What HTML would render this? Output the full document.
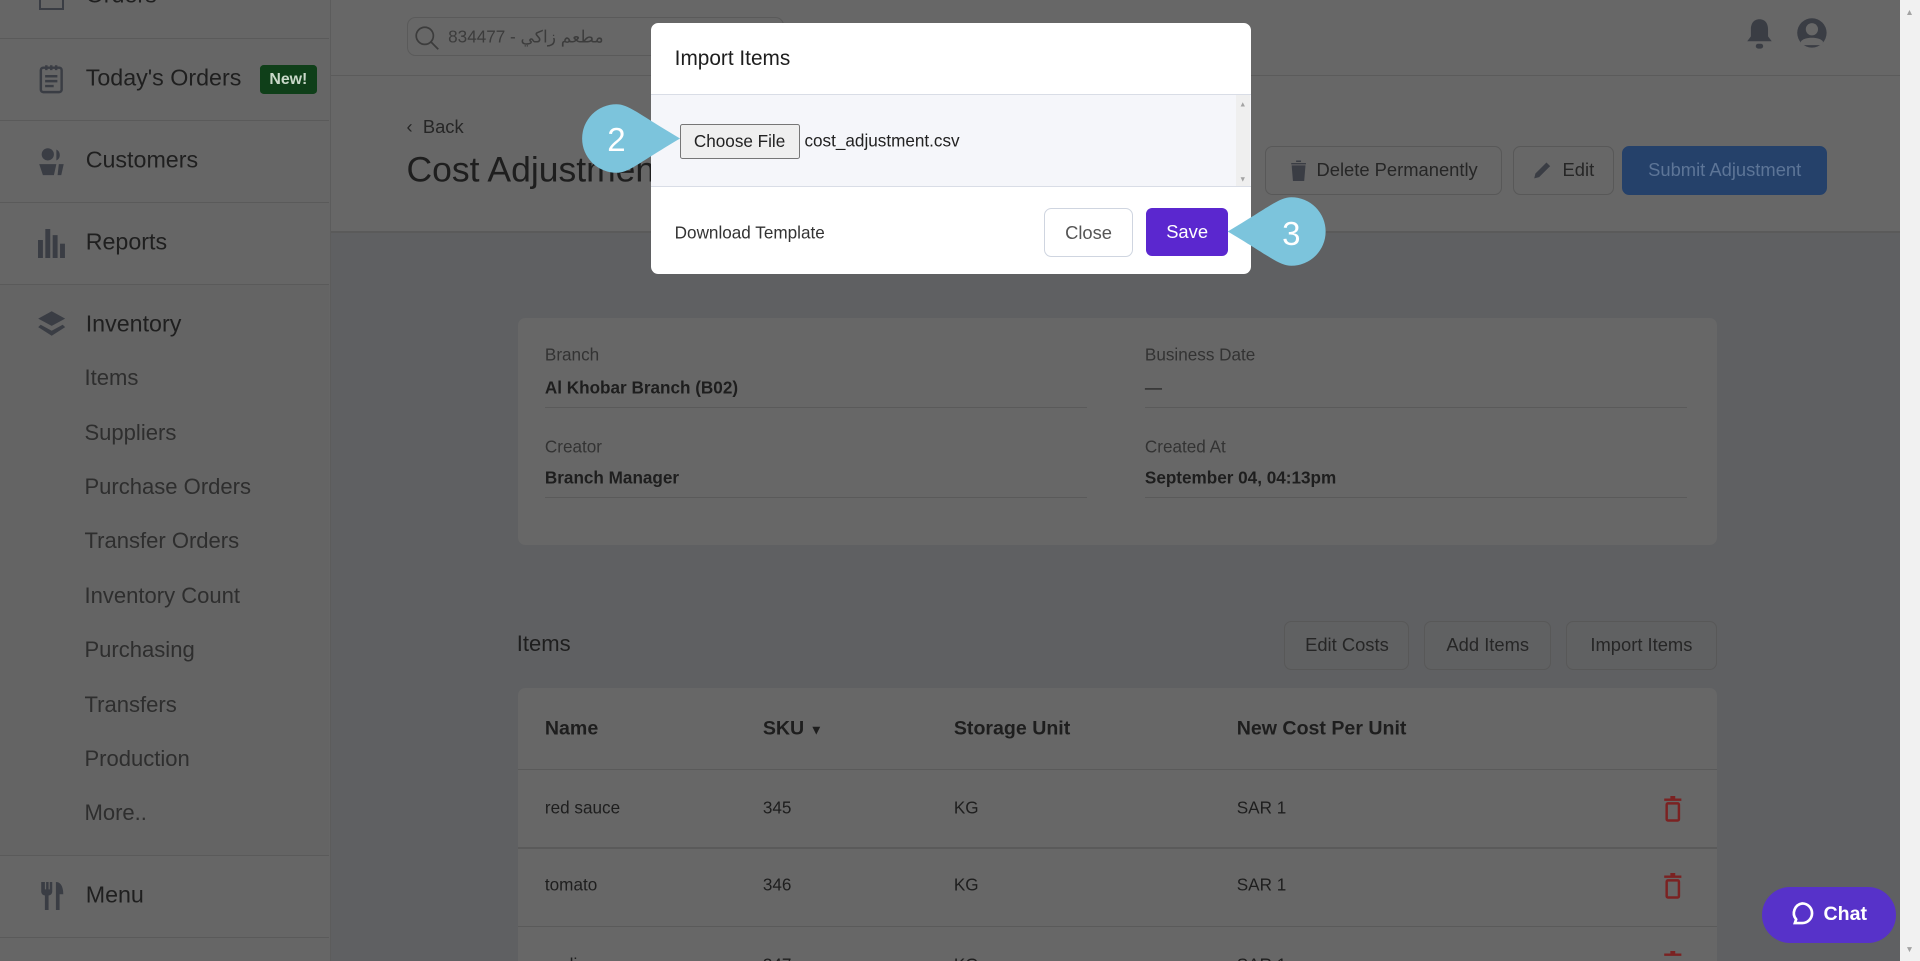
<!DOCTYPE html>
<html><head><meta charset="utf-8"><style>
*{box-sizing:border-box;margin:0;padding:0}
html,body{width:1920px;height:961px;overflow:hidden;background:#5f6062}
#w{zoom:1.22449;width:1568px;height:785px;position:relative;font-family:"Liberation Sans","Noto Sans CJK SC",sans-serif;color:#1e1e1e;overflow:hidden}
.a{position:absolute}
.sb{left:0;top:0;width:270px;height:785px;background:#666;border-right:1px solid #5c5c5c}
.sep{position:absolute;left:0;width:269px;height:1px;background:#5a5a5a}
.nav{position:absolute;left:70px;font-size:19px;color:#1f1f1f;transform:translateY(-50%)}
.sub{position:absolute;left:69px;font-size:18px;color:#2e2e2e;transform:translateY(-50%)}
.btn{position:absolute;border:1px solid #585858;border-radius:6px;font-size:15px;color:#262626;display:flex;align-items:center;justify-content:center;background:#676767}
.t{position:absolute;transform:translateY(-50%);white-space:nowrap}
</style></head><body><div id="w">
<!-- sidebar -->
<div class="a sb"></div>
<div class="a" style="left:0;top:232px;width:269px;height:466px;background:#646464"></div>
<div class="sep" style="top:31px"></div><div class="sep" style="top:98px"></div><div class="sep" style="top:165px"></div><div class="sep" style="top:232px"></div><div class="sep" style="top:698px"></div><div class="sep" style="top:765px"></div>
<div class="nav" style="top:-4px">Orders</div>
<div class="a" style="left:32px;top:0;width:20px;height:8px;border:2px solid #3a3d44;border-top:none"></div>
<svg class="a" style="left:32px;top:52px" width="20" height="25" viewBox="0 0 20 25"><rect x="1.5" y="3" width="17" height="20" rx="2" fill="none" stroke="#3a3d44" stroke-width="2"/><path d="M6 1v4M10 1v4M14 1v4M5 10h10M5 14h10M5 18h7" stroke="#3a3d44" stroke-width="2"/></svg>
<div class="nav" style="top:64px">Today's Orders</div>
<div class="a" style="left:212px;top:53px;width:47px;height:24px;background:#0f3f19;border-radius:3px;color:#c9d8c9;font-size:13px;font-weight:bold;display:flex;align-items:center;justify-content:center">New!</div>
<svg class="a" style="left:31px;top:120px" width="22" height="24" viewBox="0 0 22 24"><circle cx="8" cy="6" r="5" fill="#3a3d44"/><path d="M1 14h14l-2 9H4z" fill="#3a3d44"/><path d="M15 2a5 5 0 010 9M17 14h4l-2 9h-3z" fill="#3a3d44"/></svg>
<div class="nav" style="top:131px">Customers</div>
<svg class="a" style="left:31px;top:187px" width="22" height="24"><rect x="0" y="9" width="4" height="15" fill="#3a3d44"/><rect x="6" y="0" width="4" height="24" fill="#3a3d44"/><rect x="12" y="5" width="4" height="19" fill="#3a3d44"/><rect x="18" y="12" width="4" height="12" fill="#3a3d44"/></svg>
<div class="nav" style="top:198px">Reports</div>
<svg class="a" style="left:30px;top:253px" width="24" height="24" viewBox="0 0 24 24"><path d="M12 1l11 6-11 6L1 7z" fill="#3a3d44"/><path d="M3 12l9 5 9-5 2 2-11 7L1 14z" fill="#3a3d44"/></svg>
<div class="nav" style="top:265px">Inventory</div>
<div class="sub" style="top:309px">Items</div><div class="sub" style="top:354px">Suppliers</div><div class="sub" style="top:398px">Purchase Orders</div><div class="sub" style="top:442px">Transfer Orders</div><div class="sub" style="top:487px">Inventory Count</div><div class="sub" style="top:531px">Purchasing</div><div class="sub" style="top:576px">Transfers</div><div class="sub" style="top:620px">Production</div><div class="sub" style="top:664px">More..</div>
<svg class="a" style="left:33px;top:720px" width="20" height="23" viewBox="0 0 20 23"><path d="M1 0v8a3 3 0 003 3v12h3V11a3 3 0 003-3V0H8v6H7V0H5v6H4V0zM13 0c4 0 6 4 6 10h-3v13h-3z" fill="#3a3d44"/></svg>
<div class="nav" style="top:731px">Menu</div>
<!-- top header -->
<div class="a" style="left:270px;top:0;width:1282px;height:189px;background:#676767"></div>
<div class="a" style="left:270px;top:61px;width:1282px;height:1px;background:#5b5b5b"></div>
<div class="a" style="left:270px;top:189px;width:1282px;height:1px;background:#5a5a5a"></div>
<div class="a" style="left:332px;top:14px;width:308px;height:32px;border:1px solid #5a5a5a;border-radius:7px"></div>
<svg class="a" style="left:339px;top:21px" width="20" height="20"><circle cx="8" cy="8" r="7" fill="none" stroke="#3c3c3c" stroke-width="1.4"/><path d="M13 13l6 6" stroke="#3c3c3c" stroke-width="1.4"/></svg>
<div class="t" style="left:366px;top:30px;font-size:14px;color:#3c3c3c">834477 - مطعم زاكي</div>
<svg class="a" style="left:1426px;top:15px" width="22" height="26" viewBox="0 0 22 26"><path d="M11 1c5 0 7 4 7 8v6l3 4H1l3-4V9c0-4 2-8 7-8z" fill="#3a3d44"/><rect x="8" y="21" width="6" height="4" rx="2" fill="#3a3d44"/></svg>
<svg class="a" style="left:1467px;top:14px" width="26" height="26" viewBox="0 0 26 26"><circle cx="13" cy="13" r="12" fill="#3a3d44"/><circle cx="13" cy="10" r="5" fill="#676767"/><path d="M4 20c3-4 15-4 18 0v3H4z" fill="#676767"/></svg>
<div class="t" style="left:332px;top:104px;font-size:15px;color:#262626">‹&nbsp;&nbsp;Back</div>
<div class="t" style="left:332px;top:139px;font-size:29px;color:#1e1e1e">Cost Adjustment</div>
<div class="btn" style="left:1033px;top:119px;width:194px;height:40px"><svg width="14" height="17" style="margin-right:8px"><path d="M1 3h12M5 1h4M2 5h10l-1 12H3z" fill="#3a3d44" stroke="#3a3d44" stroke-width="1.2"/></svg>Delete Permanently</div>
<div class="btn" style="left:1236px;top:119px;width:82px;height:40px"><svg width="16" height="16" style="margin-right:8px"><path d="M1 15l1-4 9-9 3 3-9 9z" fill="#3a3d44"/></svg>Edit</div>
<div class="btn" style="left:1325px;top:119px;width:167px;height:40px;background:#25416a;border-color:#25416a;color:#5d7597">Submit Adjustment</div>
<!-- info card -->
<div class="a" style="left:423px;top:260px;width:979px;height:185px;background:#676767;border-radius:6px"></div>
<div class="t" style="left:445px;top:290px;font-size:14px;color:#333">Branch</div>
<div class="t" style="left:445px;top:317px;font-size:14px;font-weight:bold;color:#1e1e1e">Al Khobar Branch (B02)</div>
<div class="a" style="left:445px;top:332px;width:443px;height:1px;background:#5a5a5a"></div>
<div class="t" style="left:935px;top:290px;font-size:14px;color:#333">Business Date</div>
<div class="t" style="left:935px;top:317px;font-size:14px;color:#1e1e1e">—</div>
<div class="a" style="left:935px;top:332px;width:443px;height:1px;background:#5a5a5a"></div>
<div class="t" style="left:445px;top:365px;font-size:14px;color:#333">Creator</div>
<div class="t" style="left:445px;top:390px;font-size:14px;font-weight:bold;color:#1e1e1e">Branch Manager</div>
<div class="a" style="left:445px;top:406px;width:443px;height:1px;background:#5a5a5a"></div>
<div class="t" style="left:935px;top:365px;font-size:14px;color:#333">Created At</div>
<div class="t" style="left:935px;top:390px;font-size:14px;font-weight:bold;color:#1e1e1e">September 04, 04:13pm</div>
<div class="a" style="left:935px;top:406px;width:443px;height:1px;background:#5a5a5a"></div>
<!-- items -->
<div class="t" style="left:422px;top:526px;font-size:18px;color:#1e1e1e">Items</div>
<div class="btn" style="left:1049px;top:507px;width:102px;height:40px;background:#606162">Edit Costs</div>
<div class="btn" style="left:1163px;top:507px;width:104px;height:40px;background:#606162">Add Items</div>
<div class="btn" style="left:1279px;top:507px;width:123px;height:40px;background:#606162">Import Items</div>
<div class="a" style="left:423px;top:562px;width:979px;height:230px;background:#676767;border-radius:6px"></div>
<div class="a" style="left:423px;top:628px;width:979px;height:1px;background:#5a5a5a"></div>
<div class="a" style="left:423px;top:692px;width:979px;height:1px;background:#5a5a5a"></div>
<div class="a" style="left:423px;top:756px;width:979px;height:1px;background:#5a5a5a"></div>
<div class="t" style="left:445px;top:595px;font-size:16px;font-weight:bold">Name</div>
<div class="t" style="left:623px;top:595px;font-size:16px;font-weight:bold">SKU <span style="font-size:11px">▼</span></div>
<div class="t" style="left:779px;top:595px;font-size:16px;font-weight:bold">Storage Unit</div>
<div class="t" style="left:1010px;top:595px;font-size:16px;font-weight:bold">New Cost Per Unit</div>
<div class="t" style="left:445px;top:660px;font-size:14px">red sauce</div><div class="t" style="left:623px;top:660px;font-size:14px">345</div><div class="t" style="left:779px;top:660px;font-size:14px">KG</div><div class="t" style="left:1010px;top:660px;font-size:14px">SAR 1</div>
<div class="t" style="left:445px;top:723px;font-size:14px">tomato</div><div class="t" style="left:623px;top:723px;font-size:14px">346</div><div class="t" style="left:779px;top:723px;font-size:14px">KG</div><div class="t" style="left:1010px;top:723px;font-size:14px">SAR 1</div>
<div class="t" style="left:445px;top:788px;font-size:14px">garlic</div><div class="t" style="left:623px;top:788px;font-size:14px">347</div><div class="t" style="left:779px;top:788px;font-size:14px">KG</div><div class="t" style="left:1010px;top:788px;font-size:14px">SAR 1</div>
<svg class="a" style="left:1358px;top:650px" width="16" height="21"><path d="M1 3h14M6 1h4" stroke="#7b2222" stroke-width="2"/><rect x="3" y="6" width="10" height="14" rx="1" fill="none" stroke="#7b2222" stroke-width="2"/></svg>
<svg class="a" style="left:1358px;top:713px" width="16" height="21"><path d="M1 3h14M6 1h4" stroke="#7b2222" stroke-width="2"/><rect x="3" y="6" width="10" height="14" rx="1" fill="none" stroke="#7b2222" stroke-width="2"/></svg>
<svg class="a" style="left:1358px;top:777px" width="16" height="21"><path d="M1 3h14M6 1h4" stroke="#7b2222" stroke-width="2"/></svg>
<!-- chat -->
<div class="a" style="left:1439px;top:724px;width:109px;height:46px;background:#5732c9;border-radius:23px;color:#fff;font-weight:bold;font-size:16px;display:flex;align-items:center;justify-content:center"><svg width="20" height="22" style="margin-right:7px"><path d="M10 2a8 8 0 110 16H4l1-3a8 8 0 015-13z" fill="none" stroke="#fff" stroke-width="2.2"/></svg>Chat</div>
<!-- scrollbar -->
<div class="a" style="left:1552px;top:0;width:16px;height:785px;background:#f1f1f1"></div>
<div class="t" style="left:1556px;top:10px;font-size:7px;color:#a3a3a3">▲</div>
<div class="t" style="left:1556px;top:775px;font-size:7px;color:#a3a3a3">▼</div>
<!-- modal -->
<div class="a" style="left:532px;top:19px;width:490px;height:205px;background:#fff;border-radius:6px;overflow:hidden">
 <div class="t" style="left:19px;top:29px;font-size:17px;color:#1e1e1e">Import Items</div>
 <div class="a" style="left:0;top:58px;width:490px;height:76px;background:#f5f6fa;border-top:1px solid #d9dde6;border-bottom:1px solid #d9dde6"></div>
 <div class="a" style="left:477px;top:59px;width:12px;height:74px;background:#efefef"></div>
 <div class="t" style="left:480px;top:66px;font-size:6px;color:#a3a3a3">▲</div>
 <div class="t" style="left:480px;top:127px;font-size:6px;color:#a3a3a3">▼</div>
 <div class="a" style="left:23px;top:82px;width:98px;height:29px;border:1px solid #767676;border-radius:2px;background:#efefef;font-size:14px;color:#222;display:flex;align-items:center;justify-content:center">Choose File</div>
 <div class="t" style="left:125px;top:96px;font-size:14px;color:#222">cost_adjustment.csv</div>
 <div class="t" style="left:19px;top:171px;font-size:14px;color:#333">Download Template</div>
 <div class="a" style="left:321px;top:151px;width:72px;height:40px;border:1px solid #cfd5e0;border-radius:6px;font-size:15px;color:#555;display:flex;align-items:center;justify-content:center">Close</div>
 <div class="a" style="left:404px;top:151px;width:67px;height:39px;background:#5b27cf;border-radius:5px;font-size:15px;color:#fff;display:flex;align-items:center;justify-content:center">Save</div>
</div>
<!-- callouts -->
<svg class="a" style="left:470px;top:84px" width="90" height="60"><path d="M33 1a28 28 0 100 56c10 0 18-8 52-28C51 9 43 1 33 1z" fill="#7cc4dc"/><text x="33" y="39" font-family="Liberation Sans,sans-serif" font-size="27" fill="#fff" text-anchor="middle">2</text></svg>
<svg class="a" style="left:1000px;top:160px" width="90" height="60"><path d="M55 1a28 28 0 110 56C45 57 37 49 3 29 37 9 45 1 55 1z" fill="#7cc4dc"/><text x="55" y="40" font-family="Liberation Sans,sans-serif" font-size="27" fill="#fff" text-anchor="middle">3</text></svg>
</div></body></html>
